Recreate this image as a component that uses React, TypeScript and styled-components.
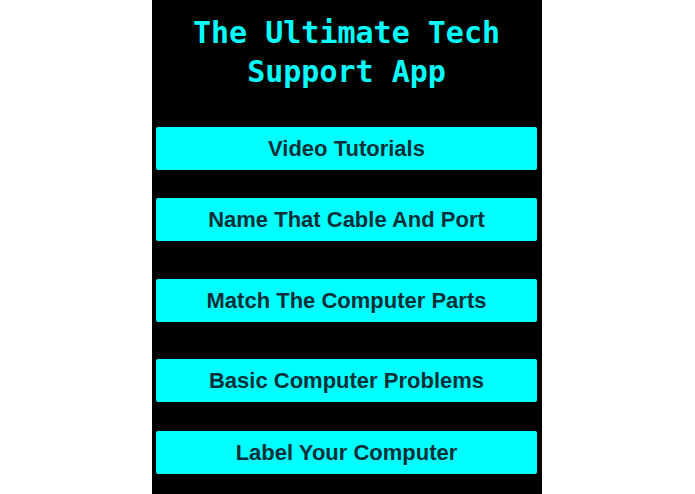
import React from "react";
import styled, { createGlobalStyle } from "styled-components";

const GlobalStyle = createGlobalStyle`
  html, body {
    margin: 0;
    padding: 0;
    background: #ffffff;
  }
  #root {
    min-height: 100vh;
  }
`;

const Screen = styled.div`
  width: 390px;
  height: 494px;
  margin-left: 152px;
  background: #000000;
  box-sizing: border-box;
  padding: 13px 5px 0 4px;
  display: flex;
  flex-direction: column;
  overflow: hidden;
`;

const Title = styled.h1`
  margin: 0 0 36px;
  font-family: "DejaVu Sans Mono", "Liberation Mono", monospace;
  font-weight: bold;
  font-size: 30px;
  line-height: 39px;
  color: #00ffff;
  text-align: center;
`;

const MenuButton = styled.button<{ $gapAfter: number }>`
  display: flex;
  align-items: center;
  justify-content: center;
  height: 43px;
  margin: 0 0 ${(p) => p.$gapAfter}px;
  padding: 0;
  border: none;
  border-radius: 2px;
  background: #00ffff;
  color: #0b2f38;
  font-family: "Liberation Sans", Arial, sans-serif;
  font-weight: bold;
  font-size: 22px;
  cursor: pointer;
`;

const items: { label: string; gap: number }[] = [
  { label: "Video Tutorials", gap: 28 },
  { label: "Name That Cable And Port", gap: 38 },
  { label: "Match The Computer Parts", gap: 37 },
  { label: "Basic Computer Problems", gap: 29 },
  { label: "Label Your Computer", gap: 0 },
];

export default function App() {
  return (
    <>
      <GlobalStyle />
      <Screen>
        <Title>
          The Ultimate Tech
          <br />
          Support App
        </Title>
        {items.map((item) => (
          <MenuButton key={item.label} $gapAfter={item.gap}>
            {item.label}
          </MenuButton>
        ))}
      </Screen>
    </>
  );
}
